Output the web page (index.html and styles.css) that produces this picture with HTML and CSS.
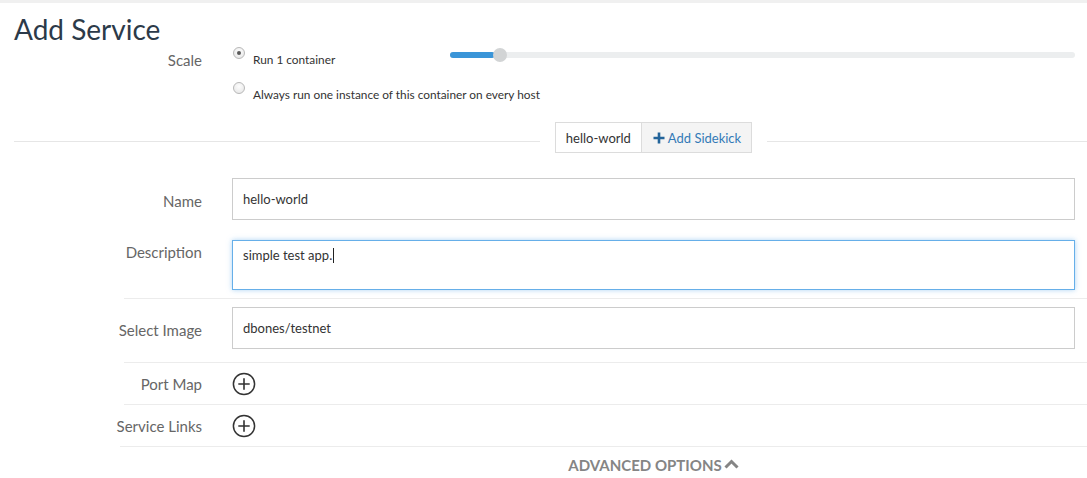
FILE: index.html
```html
<!DOCTYPE html>
<html>
<head>
<meta charset="utf-8">
<link rel="stylesheet" href="styles.css">
</head>
<body>
<div class="top-band"></div>
<div class="page">
  <h1 class="title">Add Service</h1>

  <div class="row scale-row">
    <div class="label label-scale">Scale</div>
    <div class="control">
      <div class="option option-first">
        <span class="radio checked"></span>
        <span class="option-text option-text-fixed">Run 1 container</span>
        <div class="slider">
          <div class="slider-fill" style="width:45px"></div>
          <div class="slider-thumb" style="left:43px"></div>
        </div>
      </div>
      <div class="option">
        <span class="radio"></span>
        <span class="option-text">Always run one instance of this container on every host</span>
      </div>
    </div>
  </div>

  <div class="tabs-row">
    <div class="tabs-spacer"></div>
    <div class="tabs-center">
      <div class="tabs">
        <div class="tab">hello-world</div>
        <div class="tab tab-add">
          <svg class="plus-icon" width="12" height="12" viewBox="0 0 12 12"><path d="M6 0.5V11.5M0.5 6H11.5" stroke="#23649a" stroke-width="2.6" fill="none"/></svg>
          <span>Add Sidekick</span>
        </div>
      </div>
    </div>
  </div>

  <div class="row row-name">
    <div class="label label-input">Name</div>
    <div class="control">
      <div class="field">hello-world</div>
    </div>
  </div>

  <div class="row row-desc">
    <div class="label label-desc">Description</div>
    <div class="control">
      <div class="field field-area">simple test app.<span class="caret"></span></div>
    </div>
  </div>

  <div class="divider divider-desc"></div>

  <div class="row row-image">
    <div class="label label-input">Select Image</div>
    <div class="control">
      <div class="field">dbones/testnet</div>
    </div>
  </div>

  <div class="divider divider-image"></div>

  <div class="row row-icon">
    <div class="label">Port Map</div>
    <div class="control">
      <svg class="add-circle" width="24" height="24" viewBox="0 0 24 24"><circle cx="12" cy="12" r="10.6" stroke="#333" stroke-width="1.5" fill="none"/><path d="M12 6.3V17.7M6.3 12H17.7" stroke="#333" stroke-width="1.6" fill="none"/></svg>
    </div>
  </div>

  <div class="divider"></div>

  <div class="row row-icon">
    <div class="label">Service Links</div>
    <div class="control">
      <svg class="add-circle" width="24" height="24" viewBox="0 0 24 24"><circle cx="12" cy="12" r="10.6" stroke="#333" stroke-width="1.5" fill="none"/><path d="M12 6.3V17.7M6.3 12H17.7" stroke="#333" stroke-width="1.6" fill="none"/></svg>
    </div>
  </div>

  <div class="divider divider-last"></div>

  <div class="row row-advanced">
    <div class="label"></div>
    <div class="control advanced">
      <span class="advanced-text">ADVANCED OPTIONS</span>
      <svg class="chevron" width="15" height="10" viewBox="0 0 15 10"><path d="M1.5 8.5L7.5 2.5L13.5 8.5" stroke="#858585" stroke-width="3" fill="none"/></svg>
    </div>
  </div>
</div>
</body>
</html>
```

FILE: styles.css
```css
* { box-sizing: border-box; }

html, body {
  margin: 0;
  padding: 0;
  background: #fff;
  font-family: Lato, "Open Sans", "Liberation Sans", sans-serif;
  color: #333;
}

.top-band {
  height: 3px;
  background: #f0f0f0;
}

.page {
  padding: 9px 12px 0 14px;
}

.title {
  margin: 0;
  font-size: 28px;
  line-height: 34px;
  font-weight: 400;
  color: #2c3a49;
}

.row {
  display: flex;
  gap: 30px;
}

.label {
  width: 188px;
  flex: none;
  text-align: right;
  font-size: 15px;
  line-height: 20px;
  color: #666;
}

.control {
  flex: 1;
  min-width: 0;
}

/* Scale */
.label-scale { padding-top: 4px; }

.option {
  display: flex;
  align-items: flex-start;
  height: 22px;
}

.option-first { height: 35px; }

.radio {
  flex: none;
  position: relative;
  width: 12px;
  height: 12px;
  margin: 1px 8px 0 1px;
  border-radius: 50%;
  border: 1px solid #b8b8b8;
  background: radial-gradient(circle at 50% 35%, #fdfdfd 0%, #e4e4e4 100%);
}

.radio.checked::after {
  content: "";
  position: absolute;
  left: 3px;
  top: 3px;
  width: 4px;
  height: 4px;
  border-radius: 50%;
  background: #5a5a5a;
}

.option-text {
  margin-top: 6px;
  font-size: 11.85px;
  line-height: 16px;
  color: #333;
  white-space: nowrap;
}

.option-text-fixed { width: 197px; flex: none; }

.slider {
  flex: 1;
  position: relative;
  height: 6px;
  margin-top: 6px;
  border-radius: 3px;
  background: #eceeef;
}

.slider-fill {
  height: 6px;
  border-radius: 3px;
  background: #3a95d8;
}

.slider-thumb {
  position: absolute;
  top: -4px;
  width: 14px;
  height: 14px;
  border-radius: 50%;
  background: #d2d4d5;
}

/* Tabs */
.tabs-row {
  display: flex;
  margin-top: 19px;
  margin-right: -12px;
  height: 31px;
  background: linear-gradient(#e6e6e6, #e6e6e6) 0 19px / 100% 1px no-repeat;
}

.tabs-spacer { width: 218px; flex: none; }

.tabs-center {
  flex: 1;
  display: flex;
  justify-content: center;
  padding-right: 12px;
}

.tabs {
  display: flex;
  height: 31px;
  border: 1px solid #dcdcdc;
  background: #fff;
  box-shadow: 0 0 0 15px #fff;
}

.tab {
  display: flex;
  align-items: center;
  padding: 0 10px;
  font-size: 13px;
  color: #333;
}

.tab-add {
  background: #f4f4f4;
  border-left: 1px solid #dcdcdc;
  color: #337ab7;
  padding: 0 10px 0 11px;
  gap: 3px;
}

.plus-icon { display: block; }

/* Fields */
.row-name { margin-top: 25px; }
.row-desc { margin-top: 20px; }
.row-image { margin-top: 8px; }

.label-input { padding-top: 13px; }
.label-desc { padding-top: 2px; }

.field {
  height: 42px;
  border: 1px solid #cccccc;
  padding: 0 10px;
  font-size: 13px;
  line-height: 40px;
  color: #333;
  background: #fff;
}

.field-area {
  height: 50px;
  line-height: 18px;
  padding-top: 5px;
  border-color: #66afe9;
  box-shadow: 0 0 5px rgba(102, 175, 233, 0.55);
}

.caret {
  display: inline-block;
  width: 1px;
  height: 15px;
  margin-left: 1px;
  vertical-align: -3px;
  background: #222;
}

.divider {
  height: 1px;
  background: #ececec;
  margin-left: 110px;
  margin-right: -12px;
}

.divider-desc { margin-top: 8px; }
.divider-image { margin-top: 13px; }
.divider-last { margin-left: 106px; }

.row-icon {
  height: 41px;
  align-items: center;
}

.add-circle {
  display: block;
  margin-left: 0;
}

/* Advanced */
.row-advanced { margin-top: 8px; }

.advanced {
  display: flex;
  justify-content: center;
  align-items: center;
  gap: 2px;
  height: 20px;
}

.advanced-text {
  font-size: 15px;
  font-weight: 700;
  line-height: 20px;
  color: #858585;
}

.chevron { display: block; margin-top: -2px; }
```
